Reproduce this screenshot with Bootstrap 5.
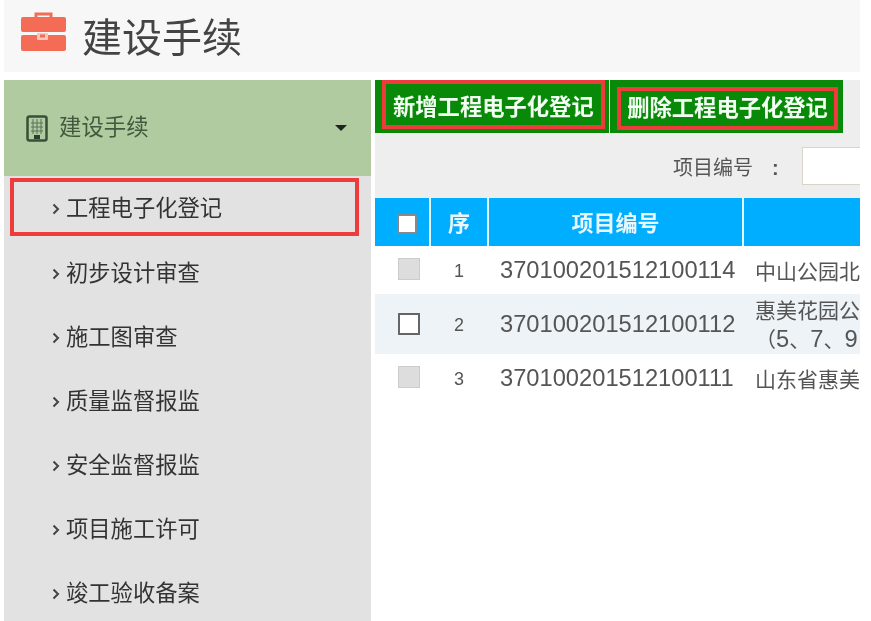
<!DOCTYPE html>
<html lang="zh"><head><meta charset="utf-8"><title>建设手续</title>
<link href="https://cdn.jsdelivr.net/npm/bootstrap@5.3.0/dist/css/bootstrap.min.css" rel="stylesheet">
<style>
html,body{height:621px;overflow:hidden;background:#fff}
body{font-family:"Liberation Sans","Noto Sans CJK SC",sans-serif;color:#444}
.pg{width:860px;height:621px;padding-left:4px;overflow:hidden;filter:blur(.55px)}
.hd{height:72px;background:#f7f7f7;padding:12px 0 0 17px;gap:16px}
.hd-t{font-size:40px;line-height:52px;color:#444}
.bd{margin-top:8px;gap:4px}
.sb{width:367px;height:541px;background:#e2e2e2;flex:none}
.sb-h{height:96px;background:#afcb9f;padding:0 24px 0 22px;font-size:22.4px;color:#44583f}
.sb-ic{margin-right:11px}
.sb-it{height:64px;padding-left:48px;font-size:22.3px;color:#333}
.sb-it.on{height:58px;margin:2px 12px 6px 6px;padding:3px 0 0 38px;border:4px solid #ee3b3b}
.car{width:0;height:0;border-left:6px solid transparent;border-right:6px solid transparent;border-top:6px solid #222}
.chev{margin-right:6px;flex:none}
.mn{width:485px;overflow:hidden;flex:none}
.band{background:#eeeeee;height:118px}
.tools{height:53px}
.gb{background:#088a08;color:#f2fff2;font-weight:700;font-size:22.3px;height:53px;display:flex;border-right:1px solid #eee}
.gb span{display:flex;align-items:center;border:4px solid #ee3b3b;white-space:nowrap}
.b1{padding:0 4px 4px 7px}
.b1 span{padding:6px 7px 0}
.b2{padding:7px 5px 3px 7px}
.b2 span{padding:0 6.500px}
.srch{height:65px;padding-top:14px;font-size:20px;color:#555;white-space:nowrap;margin-left:298px}
.srch-l{padding-top:6px;width:80px;flex:none}
.srch-c{padding-top:6px;margin-left:19px;width:6px;flex:none;font-weight:700}
.inp{width:100px;height:38px;background:#fff;border:1px solid #d8d4c8;flex:none;margin-left:24px}
.tb{border-collapse:collapse;table-layout:fixed;width:485px;font-size:22px}
.tb th{background:#00aeff;color:#e8f6ff;font-weight:700;text-align:center;height:48px;border-right:2px solid #e6f6ff;padding:2px 0 0}
.tb th.c0{text-align:left;padding:0 0 0 22px}
.tb th.lst{border-right:0}
.tb td{padding:0;vertical-align:middle;color:#555;white-space:nowrap;overflow:hidden}
.tb tr.r td{height:48px}
.tb tr.s td{height:59px;background:#edf3f7}
.c0td{padding-left:23px!important}
.idx{font-size:18px;text-align:center;padding-top:2px!important}
.num{font-size:23.7px;padding:2px 0 0 12px!important}
.nm{padding:3px 0 0 12px!important;font-size:21px;line-height:28px}
.dg{font-size:23.7px}
.ck{display:inline-block;width:22px;height:22px;background:#ddd;border:1px solid #ccc;vertical-align:middle;margin-top:-6px}
.ck.w{background:#fff;border:2px solid #666;margin-top:-4px}
.ck.h{width:20px;height:20px;background:#fff;border:2px solid #888;border-radius:2px;margin-top:0}
</style></head><body>
<div class="pg">
<div class="hd d-flex align-items-start">
<svg width="45" height="39" viewBox="0 0 45 39"><path d="M15 6V2h15v4" fill="none" stroke="#f46c55" stroke-width="3"/><rect x="0" y="5" width="45" height="15" rx="2" fill="#f46c55"/><rect x="0" y="23" width="45" height="16" rx="2" fill="#f46c55"/><rect x="16" y="21" width="11" height="7" rx="1" fill="#f9c6bb"/><rect x="19" y="22.500" width="5" height="3" fill="#f46c55"/></svg>
<div class="hd-t">建设手续</div>
</div>
<div class="bd d-flex">
<div class="sb">
<div class="sb-h d-flex align-items-center">
<svg width="22" height="27" viewBox="0 0 22 27" class="sb-ic"><rect x="1.500" y="1.500" width="19" height="24" rx="2" fill="none" stroke="#38503a" stroke-width="2.5"/><path d="M7 4v15M11 4v15M15 4v15M5 8h12M5 12h12M5 16h12" stroke="#5c705a" stroke-width="1"/><rect x="8" y="20" width="6" height="4" fill="#2c3f2c"/></svg>
<span class="flex-grow-1">建设手续</span><span class="car"></span>
</div>
<div class="sb-it on d-flex align-items-center"><svg class="chev" width="8" height="12" viewBox="0 0 8 12"><path d="M1.500 1.500 6 6l-4.500 4.500" fill="none" stroke="#444" stroke-width="2"/></svg>工程电子化登记</div>
<div class="sb-it d-flex align-items-center"><svg class="chev" width="8" height="12" viewBox="0 0 8 12"><path d="M1.500 1.500 6 6l-4.500 4.500" fill="none" stroke="#444" stroke-width="2"/></svg>初步设计审查</div>
<div class="sb-it d-flex align-items-center"><svg class="chev" width="8" height="12" viewBox="0 0 8 12"><path d="M1.500 1.500 6 6l-4.500 4.500" fill="none" stroke="#444" stroke-width="2"/></svg>施工图审查</div>
<div class="sb-it d-flex align-items-center"><svg class="chev" width="8" height="12" viewBox="0 0 8 12"><path d="M1.500 1.500 6 6l-4.500 4.500" fill="none" stroke="#444" stroke-width="2"/></svg>质量监督报监</div>
<div class="sb-it d-flex align-items-center"><svg class="chev" width="8" height="12" viewBox="0 0 8 12"><path d="M1.500 1.500 6 6l-4.500 4.500" fill="none" stroke="#444" stroke-width="2"/></svg>安全监督报监</div>
<div class="sb-it d-flex align-items-center"><svg class="chev" width="8" height="12" viewBox="0 0 8 12"><path d="M1.500 1.500 6 6l-4.500 4.500" fill="none" stroke="#444" stroke-width="2"/></svg>项目施工许可</div>
<div class="sb-it d-flex align-items-center"><svg class="chev" width="8" height="12" viewBox="0 0 8 12"><path d="M1.500 1.500 6 6l-4.500 4.500" fill="none" stroke="#444" stroke-width="2"/></svg>竣工验收备案</div>
</div>
<div class="mn">
<div class="band">
<div class="tools d-flex">
<div class="gb b1"><span>新增工程电子化登记</span></div>
<div class="gb b2"><span>删除工程电子化登记</span></div>
</div>
<div class="srch d-flex align-items-start"><span class="srch-l">项目编号</span><span class="srch-c">:</span><div class="inp"></div></div>
</div>
<table class="tb">
<colgroup><col style="width:55px"><col style="width:58px"><col style="width:255px"><col style="width:117px"></colgroup>
<tr><th class="c0"><span class="ck h"></span></th><th>序</th><th>项目编号</th><th class="lst"></th></tr>
<tr class="r"><td class="c0td"><span class="ck"></span></td><td class="idx">1</td><td class="num">370100201512100114</td><td class="nm">中山公园北</td></tr>
<tr class="s"><td class="c0td"><span class="ck w"></span></td><td class="idx">2</td><td class="num">370100201512100112</td><td class="nm">惠美花园公<br>（<span class="dg">5</span>、<span class="dg">7</span>、<span class="dg">9</span></td></tr>
<tr class="r"><td class="c0td"><span class="ck"></span></td><td class="idx">3</td><td class="num">370100201512100111</td><td class="nm">山东省惠美</td></tr>
</table>
</div>
</div>
</div>
</body></html>
